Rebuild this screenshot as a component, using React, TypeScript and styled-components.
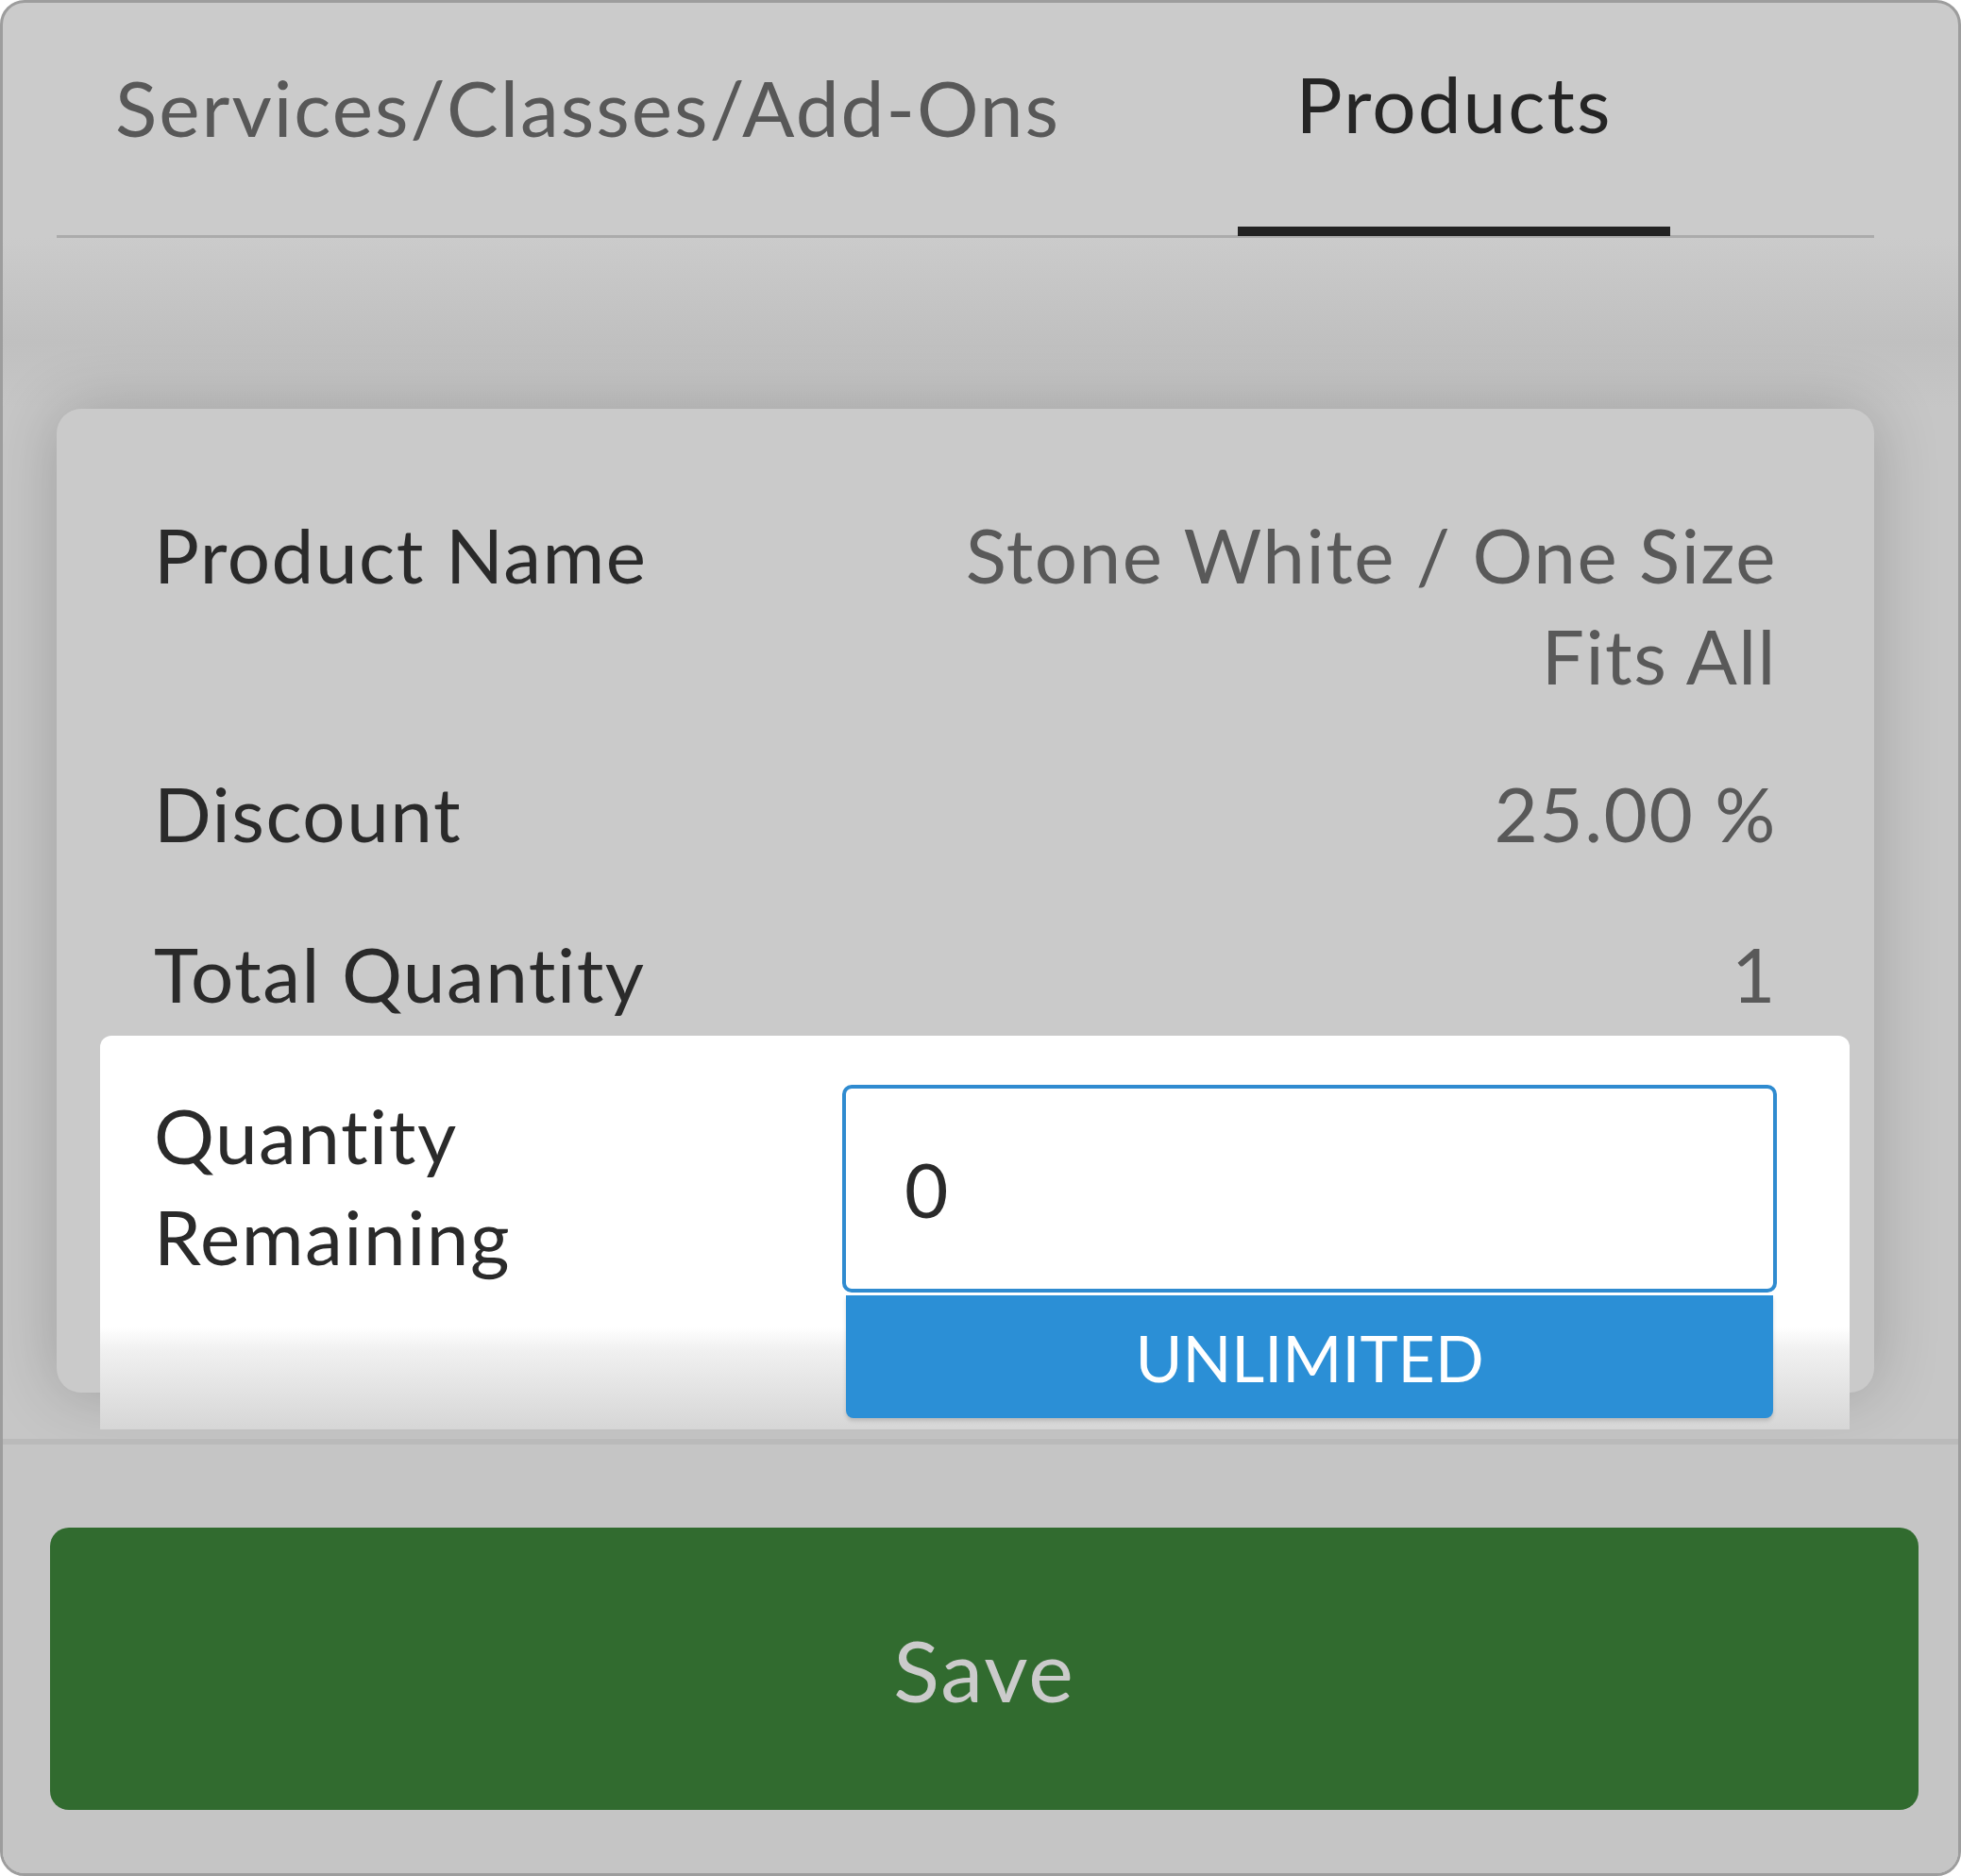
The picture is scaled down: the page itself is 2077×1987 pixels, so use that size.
import React from "react";
import styled, { createGlobalStyle } from "styled-components";

const Global = createGlobalStyle`
  html, body { margin: 0; padding: 0; background: #fff; }
  * { box-sizing: border-box; }
`;

const Frame = styled.div`
  width: 2077px;
  height: 1987px;
  border: 3px solid #9d9d9d;
  border-radius: 26px;
  background: #cbcbcb;
  overflow: hidden;
  display: flex;
  flex-direction: column;
  font-family: Lato, "Noto Sans", sans-serif;
`;

const TabBar = styled.div`
  margin: 0 89px 0 57px;
  display: flex;
  border-bottom: 3px solid #ababab;
  height: 249px;
`;

const Tab = styled.div<{ $active?: boolean; $w: number }>`
  width: ${(p) => p.$w}px;
  display: flex;
  align-items: center;
  justify-content: ${(p) => (p.$active ? "center" : "flex-start")};
  padding-left: ${(p) => (p.$active ? 0 : 62)}px;
  padding-bottom: 26px;
  font-size: 82px;
  letter-spacing: 2px;
  color: ${(p) => (p.$active ? "#252525" : "#585858")};
  border-bottom: ${(p) => (p.$active ? "10px solid #222" : "none")};
  margin-bottom: ${(p) => (p.$active ? "-1px" : "0")};
`;

const Stage = styled.div`
  flex: 1;
  padding: 181px 89px 0 57px;
  background: linear-gradient(#cbcbcb 0, #c0c0c0 110px, #c6c6c6 181px);
  display: flex;
  flex-direction: column;
`;

const Card = styled.div`
  height: 1042px;
  background: #cacaca;
  border-radius: 26px;
  box-shadow: 0 0 70px rgba(0, 0, 0, 0.2);
  padding: 101px 103px 0 103px;
  display: flex;
  flex-direction: column;
`;

const Row = styled.div<{ $gap: number }>`
  display: flex;
  justify-content: space-between;
  align-items: flex-start;
  margin-bottom: ${(p) => p.$gap}px;
  font-size: 80px;
  line-height: 107px;
  letter-spacing: 1.5px;
`;

const Label = styled.div`
  color: #2a2a2a;
`;

const Value = styled.div`
  color: #595959;
  text-align: right;
  max-width: 900px;
`;

const Panel = styled.div`
  margin: 0 -77px 0 -57px;
  height: 417px;
  flex-shrink: 0;
  background: linear-gradient(#fff 0, #fff 74%, #f0f0f0 80%, #d6d6d6 100%);
  border-radius: 12px 12px 0 0;
  padding: 52px 77px 0 57px;
  display: flex;
  justify-content: space-between;
  align-items: flex-start;
`;

const PanelLabel = styled.div`
  font-size: 80px;
  line-height: 107px;
  letter-spacing: 1.5px;
  color: #2a2a2a;
`;

const Field = styled.div`
  width: 990px;
  display: flex;
  flex-direction: column;
`;

const Input = styled.div`
  height: 220px;
  border: 4px solid #2f8bd0;
  border-radius: 10px;
  background: #fff;
  display: flex;
  align-items: center;
  padding-left: 62px;
  font-size: 80px;
  color: #2a2a2a;
`;

const Unlimited = styled.div`
  margin: 3px 4px 0;
  height: 130px;
  background: #2b8fd6;
  border-radius: 0 0 8px 8px;
  box-shadow: 0 3px 4px rgba(0, 0, 0, 0.15);
  color: #fff;
  font-size: 68px;
  display: flex;
  align-items: center;
  justify-content: center;
`;

const Footer = styled.div`
  margin: 49px -89px 0 -57px;
  flex: 1;
  background: #c5c5c5;
  border-top: 6px solid #bababa;
  padding: 88px 42px 0 50px;
`;

const Save = styled.button`
  width: 100%;
  height: 299px;
  border: none;
  border-radius: 20px;
  background: #316b2f;
  color: #cbcbcb;
  font-family: Lato, "Noto Sans", sans-serif;
  font-size: 90px;
  letter-spacing: 2px;
`;

export default function App() {
  return (
    <>
      <Global />
      <Frame>
        <TabBar>
          <Tab $w={1251}>Services/Classes/Add-Ons</Tab>
          <Tab $w={458} $active>
            Products
          </Tab>
        </TabBar>
        <Stage>
          <Card>
            <Row $gap={60}>
              <Label>Product Name</Label>
              <Value>
                Stone White / One Size
                <br />
                Fits All
              </Value>
            </Row>
            <Row $gap={63}>
              <Label>Discount</Label>
              <Value>25.00 %</Value>
            </Row>
            <Row $gap={12}>
              <Label>Total Quantity</Label>
              <Value>1</Value>
            </Row>
            <Panel>
              <PanelLabel>
                Quantity
                <br />
                Remaining
              </PanelLabel>
              <Field>
                <Input>0</Input>
                <Unlimited>UNLIMITED</Unlimited>
              </Field>
            </Panel>
          </Card>
          <Footer>
            <Save>Save</Save>
          </Footer>
        </Stage>
      </Frame>
    </>
  );
}
